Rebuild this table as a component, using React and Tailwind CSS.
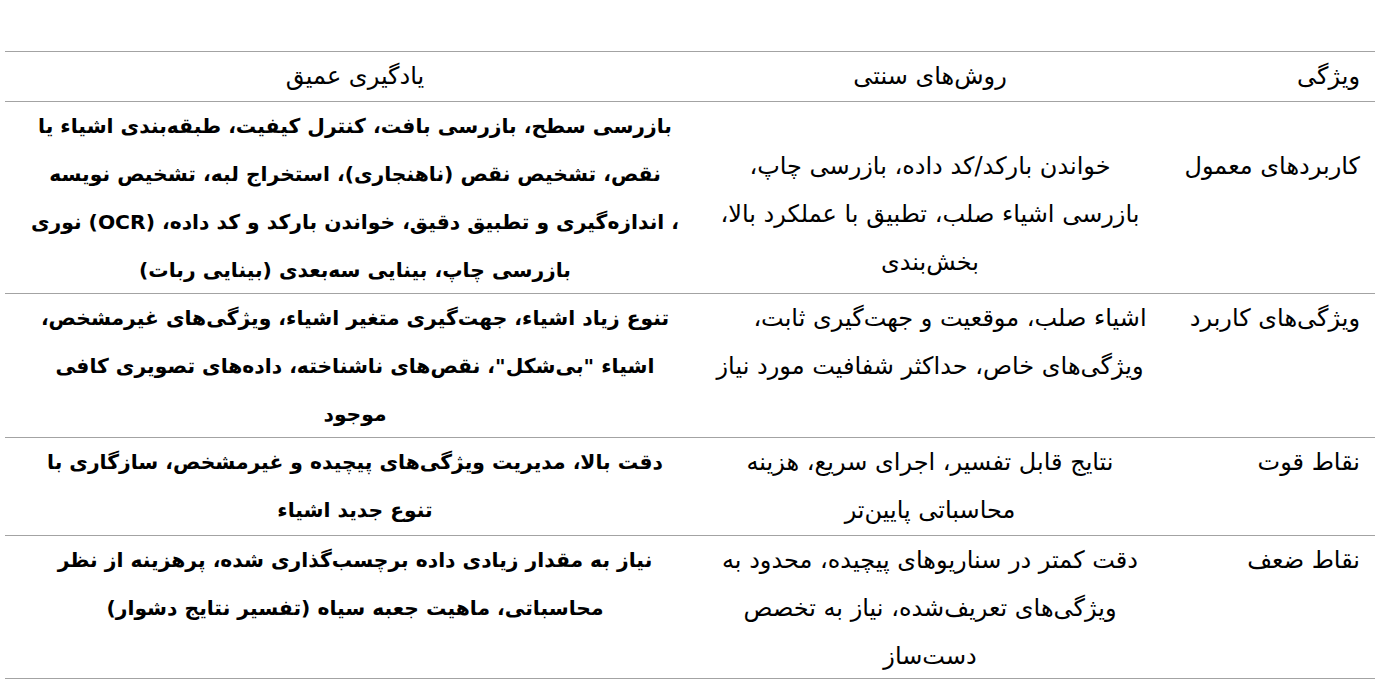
import React from 'react';

const Z = '\u200c';

// each cell is a list of already-broken lines, so the wrap matches the reference
const rows = [
  {
    feature: 'کاربردهای معمول',
    offset: true,
    h: 'h-[192px]',
    classic: [
      'خواندن بارکد/کد داده، بازرسی چاپ،',
      'بازرسی اشیاء صلب، تطبیق با عملکرد بالا،',
      `بخش${Z}بندی`,
    ],
    deep: [
      `بازرسی سطح، بازرسی بافت، کنترل کیفیت، طبقه${Z}بندی اشیاء یا`,
      'نقص، تشخیص نقص (ناهنجاری)، استخراج لبه، تشخیص نویسه',
      `، اندازه${Z}گیری و تطبیق دقیق، خواندن بارکد و کد داده، (OCR) نوری`,
      `بازرسی چاپ، بینایی سه${Z}بعدی (بینایی ربات)`,
    ],
  },
  {
    feature: `ویژگی${Z}های کاربرد`,
    shiftFirst: true,
    h: 'h-[144px]',
    classic: [
      `اشیاء صلب، موقعیت و جهت${Z}گیری ثابت،`,
      `ویژگی${Z}های خاص، حداکثر شفافیت مورد نیاز`,
    ],
    deep: [
      `تنوع زیاد اشیاء، جهت${Z}گیری متغیر اشیاء، ویژگی${Z}های غیرمشخص،`,
      `اشیاء "بی${Z}شکل"، نقص${Z}های ناشناخته، داده${Z}های تصویری کافی`,
      'موجود',
    ],
  },
  {
    feature: 'نقاط قوت',
    h: 'h-[98px]',
    classic: ['نتایج قابل تفسیر، اجرای سریع، هزینه', `محاسباتی پایین${Z}تر`],
    deep: [
      `دقت بالا، مدیریت ویژگی${Z}های پیچیده و غیرمشخص، سازگاری با`,
      'تنوع جدید اشیاء',
    ],
  },
  {
    feature: 'نقاط ضعف',
    h: 'h-[143px]',
    classic: [
      `دقت کمتر در سناریوهای پیچیده، محدود به`,
      `ویژگی${Z}های تعریف${Z}شده، نیاز به تخصص`,
      `دست${Z}ساز`,
    ],
    deep: [
      `نیاز به مقدار زیادی داده برچسب${Z}گذاری شده، پرهزینه از نظر`,
      'محاسباتی، ماهیت جعبه سیاه (تفسیر نتایج دشوار)',
    ],
  },
];

const Lines = ({ lines, shiftFirst }) => (
  <>
    {lines.map((l, i) => (
      <div key={i} className={`whitespace-nowrap ${shiftFirst && i === 0 ? 'pl-[40px]' : ''}`}>
        {l}
      </div>
    ))}
  </>
);

export default function App() {
  return (
    <div className="h-[680px] overflow-hidden bg-white pt-[51px] pl-[5px] text-black" style={{ fontFamily: '"DejaVu Sans", sans-serif' }}>
      <div dir="rtl" className="w-[1370px] border-t border-[#a3a3a3] text-[24px] leading-[48px]">
        {/* header */}
        <div className="grid h-[50px] grid-cols-[220px_450px_700px] border-b border-[#a3a3a3]">
          <div className="pr-[15px] text-right">ویژگی</div>
          <div className="text-center">{`روش${Z}های سنتی`}</div>
          <div className="text-center">یادگیری عمیق</div>
        </div>

        {rows.map((r, i) => (
          <div key={i} className={`grid grid-cols-[220px_450px_700px] border-b border-[#a3a3a3] ${r.h}`}>
            <div className={`pr-[15px] text-right ${r.offset ? 'pt-[40px]' : ''}`}>{r.feature}</div>
            <div className={`text-center ${r.offset ? 'pt-[40px]' : ''}`}>
              <Lines lines={r.classic} shiftFirst={r.shiftFirst} />
            </div>
            <div className="text-center text-[20.3px] font-bold">
              <Lines lines={r.deep} />
            </div>
          </div>
        ))}
      </div>
    </div>
  );
}
